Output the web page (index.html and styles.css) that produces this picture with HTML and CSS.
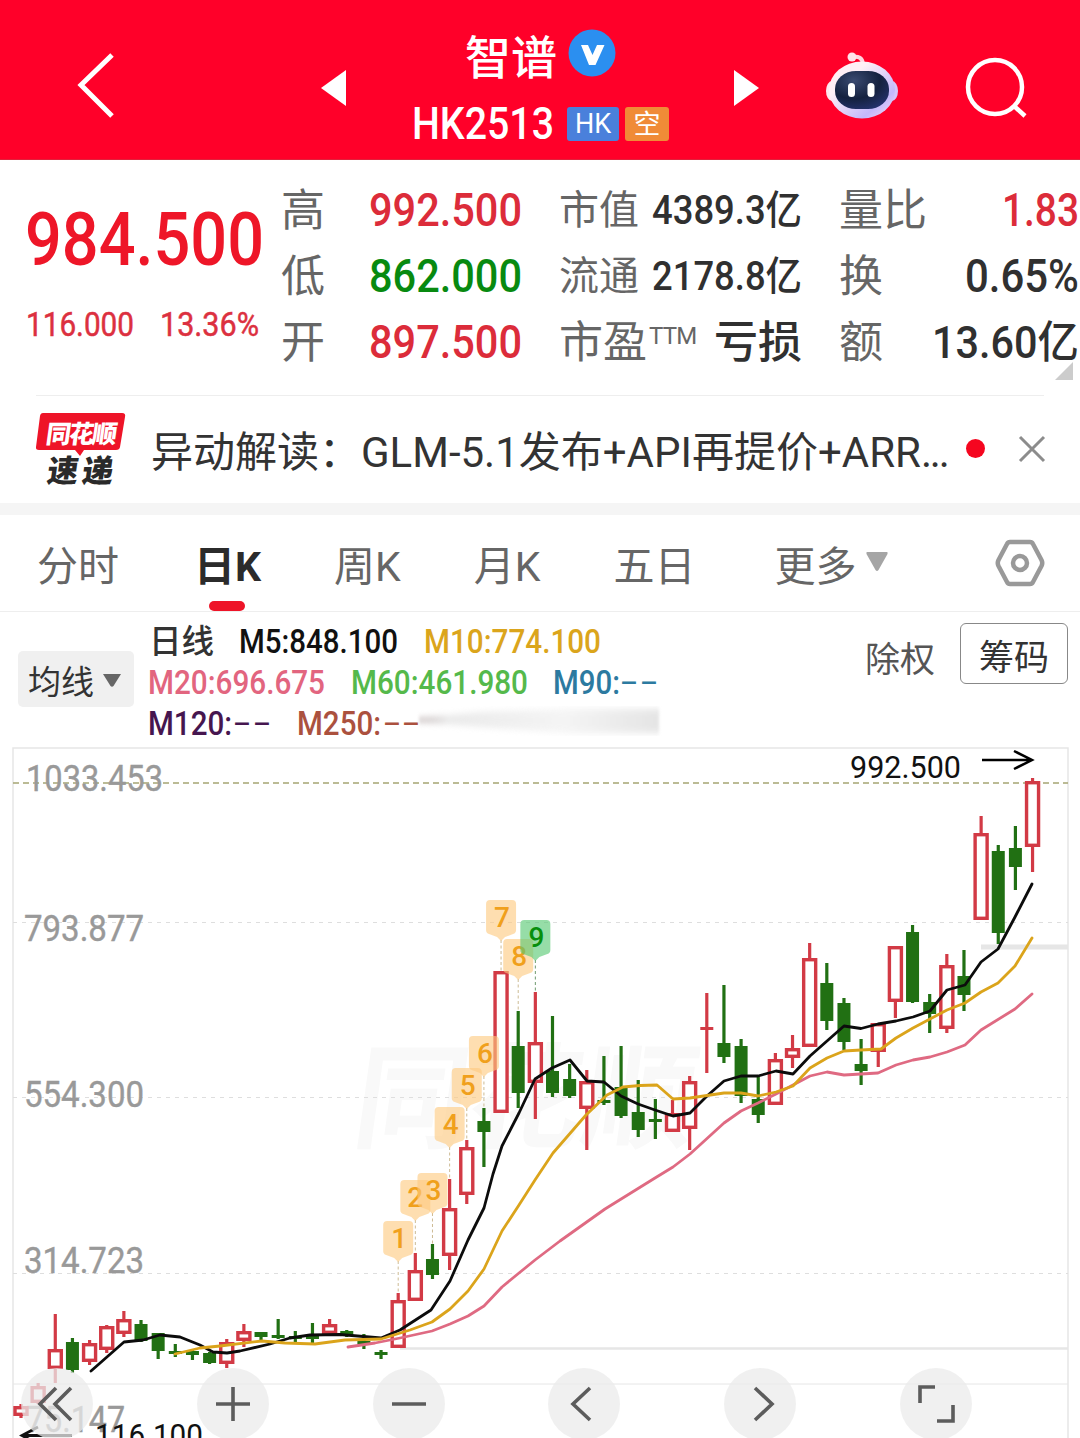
FILE: index.html
```html
<!DOCTYPE html>
<html lang="zh-CN">
<head>
<meta charset="utf-8">
<title>智谱 HK2513</title>
<link rel="stylesheet" href="styles.css">
</head>
<body>
<div class="app">
  <header class="header">
    <svg class="back" width="40" height="66" viewBox="0 0 40 66"><path d="M36 3 5 33 36 64" fill="none" stroke="#fff" stroke-width="5"/></svg>
    <svg class="prev" width="25" height="36" viewBox="0 0 25 36"><path d="M25 0V36L0 18z" fill="#fff"/></svg>
    <div class="title">
      <div class="name"><span>智谱</span>
        <svg width="48" height="48" viewBox="0 0 48 48"><circle cx="24" cy="25" r="23.5" fill="#2b8ff0"/><path d="M13 17H20L24.500 27 29 17H36.500L27.500 37H21z" fill="#fff"/></svg>
      </div>
      <div class="code">
        <svg class="fit" width="141" height="34"><text x="-1" y="32" font-size="43.500" font-weight="500" fill="#fff" textLength="142" lengthAdjust="spacingAndGlyphs">HK2513</text></svg>
        <span class="badge badge-hk">HK</span><span class="badge badge-short">空</span>
      </div>
    </div>
    <svg class="next" width="25" height="36" viewBox="0 0 25 36"><path d="M0 0V36L25 18z" fill="#fff"/></svg>
    <svg class="robot" width="74" height="70" viewBox="0 0 74 70">
      <defs>
        <linearGradient id="shell" x1="0" y1="0" x2="1" y2="1"><stop offset=".3" stop-color="#fff0f6"/><stop offset=".75" stop-color="#c3b8fb"/><stop offset="1" stop-color="#fbdcf3"/></linearGradient>
        <radialGradient id="visor" cx=".35" cy=".25" r=".8"><stop offset="0" stop-color="#3a4a70"/><stop offset=".6" stop-color="#14213f"/><stop offset="1" stop-color="#23306a"/></radialGradient>
      </defs>
      <path d="M27 6Q37 4 38 13" fill="none" stroke="#ffd5df" stroke-width="4"/><circle cx="27" cy="6" r="4.500" fill="#ffe3ea"/>
      <ellipse cx="7" cy="40" rx="6" ry="10" fill="#ffe6ee"/><ellipse cx="67" cy="40" rx="6" ry="10" fill="#d5c6fa"/>
      <ellipse cx="37" cy="39" rx="33" ry="28.500" fill="url(#shell)"/>
      <rect x="10" y="20" width="54" height="38" rx="21" ry="18" fill="url(#visor)"/>
      <rect x="23" y="32" width="7" height="14" rx="3.500" fill="#fff"/><rect x="42.500" y="32" width="7" height="14" rx="3.500" fill="#fff"/>
    </svg>
    <svg class="search" width="64" height="64" viewBox="0 0 64 64"><g fill="none" stroke="#fff" stroke-width="4.500"><circle cx="31" cy="30" r="27"/><path d="M49 48 61 59"/></g></svg>
  </header>

  <section class="quote">
    <div class="price">
      <svg class="fit" width="235" height="56"><text x="-2" y="54" font-size="75" font-weight="500" fill="#ee1628" textLength="239" lengthAdjust="spacingAndGlyphs">984.500</text></svg>
      <div class="change">
        <svg class="fit" width="106" height="26"><text x="-1" y="25" font-size="34" fill="#dc3040" stroke="#dc3040" stroke-width=".5" textLength="108" lengthAdjust="spacingAndGlyphs">116.000</text></svg>
        <svg class="fit" width="97" height="26"><text x="-1" y="25" font-size="34" fill="#dc3040" stroke="#dc3040" stroke-width=".5" textLength="99" lengthAdjust="spacingAndGlyphs">13.36%</text></svg>
      </div>
    </div>
    <dl class="stats stats-a">
      <div><dt>高</dt><dd><svg class="fit" width="151" height="66"><text x="-1" y="49" font-size="45.500" font-weight="500" fill="#dc2c3a" textLength="153" lengthAdjust="spacingAndGlyphs">992.500</text></svg></dd></div>
      <div><dt>低</dt><dd><svg class="fit" width="151" height="66"><text x="-1" y="49" font-size="45.500" font-weight="500" fill="#088a10" textLength="153" lengthAdjust="spacingAndGlyphs">862.000</text></svg></dd></div>
      <div><dt>开</dt><dd><svg class="fit" width="151" height="66"><text x="-1" y="49" font-size="45.500" font-weight="500" fill="#dc2c3a" textLength="153" lengthAdjust="spacingAndGlyphs">897.500</text></svg></dd></div>
    </dl>
    <dl class="stats stats-b">
      <div><dt class="small">市值</dt><dd><svg class="fit" width="150" height="66"><text x="0" y="47" font-size="40" font-weight="500" fill="#303030" textLength="150" lengthAdjust="spacingAndGlyphs">4389.3亿</text></svg></dd></div>
      <div><dt class="small">流通</dt><dd><svg class="fit" width="150" height="66"><text x="0" y="47" font-size="40" font-weight="500" fill="#303030" textLength="150" lengthAdjust="spacingAndGlyphs">2178.8亿</text></svg></dd></div>
      <div><dt>市盈<sup>TTM</sup></dt><dd class="loss">亏损</dd></div>
    </dl>
    <dl class="stats stats-c">
      <div><dt>量比</dt><dd><svg class="fit" width="77" height="66"><text x="-1" y="49" font-size="45.500" font-weight="500" fill="#dc2c3a" textLength="77" lengthAdjust="spacingAndGlyphs">1.83</text></svg></dd></div>
      <div><dt>换</dt><dd><svg class="fit" width="115" height="66"><text x="0" y="49" font-size="45.500" font-weight="500" fill="#303030" textLength="114" lengthAdjust="spacingAndGlyphs">0.65%</text></svg></dd></div>
      <div><dt>额</dt><dd><svg class="fit" width="147" height="66"><text x="-1" y="49" font-size="44" font-weight="500" fill="#303030" textLength="147" lengthAdjust="spacingAndGlyphs">13.60亿</text></svg></dd></div>
    </dl>
    <i class="corner"></i>
  </section>

  <section class="news">
    <svg class="logo" width="90" height="74" viewBox="0 0 90 74">
      <path d="M7 1H86Q90 1 89 5L84 35Q83.500 38 80 38H48L44 44 39 38H3Q-.500 38 0 35L4 4Q4.500 1 7 1z" fill="#ee1428"/>
      <g font-family="Noto Sans CJK SC, sans-serif" font-weight="900"><text transform="translate(9 31) skewX(-8)" font-size="25" fill="#fff" textLength="71">同花顺</text><text transform="translate(10 70) skewX(-8)" font-size="31" fill="#2a2a2a" textLength="66">速递</text></g>
    </svg>
    <p>异动解读：GLM-5.1发布+API再提价+ARR<span class="dots">...</span></p>
    <i class="dot"></i>
    <svg class="close" width="26" height="26" viewBox="0 0 26 26"><path d="M1 1 25 25M25 1 1 25" stroke="#8c8c8c" stroke-width="3"/></svg>
  </section>

  <nav class="tabs">
    <span>分时</span><span class="active">日K</span><span>周K</span><span>月K</span><span>五日</span>
    <span class="more">更多<svg width="22" height="20" viewBox="0 0 22 20"><path d="M1 0H21Q22 0 21.500 2L12.500 18Q11 20 9.500 18L.500 2Q0 0 1 0z" fill="#a5a5a5"/></svg></span>
    <svg class="gear" width="50" height="48" viewBox="0 0 50 48"><g fill="none" stroke="#999" stroke-width="4.500" stroke-linejoin="round"><path d="M15 3H35Q37 3 38 5L46.500 21Q48 24 46.500 27L38 43Q37 45 35 45H15Q13 45 12 43L3.500 27Q2 24 3.500 21L12 5Q13 3 15 3z"/><circle cx="25" cy="24" r="7"/></g></svg>
  </nav>

  <section class="legend">
    <button class="ma">均线<svg width="18" height="13" viewBox="0 0 18 13"><path d="M0 0H18L10.500 12Q9 13.500 7.500 12z" fill="#666"/></svg></button>
    <svg class="averages" width="520" height="120" viewBox="0 0 520 120">
      <defs><linearGradient id="fade"><stop offset="0" stop-color="#9b8a8a"/><stop offset=".12" stop-color="#dcdcdc"/><stop offset=".6" stop-color="#eee"/><stop offset="1" stop-color="#d4d4d4"/></linearGradient><filter id="soft"><feGaussianBlur stdDeviation="1.500 3"/></filter></defs>
      <path d="M270 95 330 89 420 86H510V110H420L330 104 270 99z" fill="url(#fade)" opacity=".6" filter="url(#soft)"/>
      <g font-size="34">
        <text class="cjk" x="0" y="30" font-size="32.500" font-weight="500" fill="#333">日线</text>
        <text x="90" y="30" fill="#111" font-weight="500" textLength="159" lengthAdjust="spacingAndGlyphs">M5:848.100</text>
        <text x="275" y="30" fill="#dba51c" font-weight="500" textLength="177" lengthAdjust="spacingAndGlyphs">M10:774.100</text>
        <text x="-1" y="71" fill="#e2657f" font-weight="500" textLength="177" lengthAdjust="spacingAndGlyphs">M20:696.675</text>
        <text x="202" y="71" fill="#55b94b" font-weight="500" textLength="177" lengthAdjust="spacingAndGlyphs">M60:461.980</text>
        <text x="404" y="71" fill="#2c7aa0" font-weight="500" textLength="67" lengthAdjust="spacingAndGlyphs">M90:</text>
        <text x="-1" y="112" fill="#46164f" font-weight="500" textLength="84" lengthAdjust="spacingAndGlyphs">M120:</text>
        <text x="148" y="112" fill="#ab513e" font-weight="500" textLength="84" lengthAdjust="spacingAndGlyphs">M250:</text>
        <g class="dashes">
          <text x="472" y="70" fill="#2c7aa0" textLength="16" lengthAdjust="spacingAndGlyphs">-</text><text x="492" y="70" fill="#2c7aa0" textLength="16" lengthAdjust="spacingAndGlyphs">-</text>
          <text x="85" y="111" fill="#46164f" textLength="16" lengthAdjust="spacingAndGlyphs">-</text><text x="105" y="111" fill="#46164f" textLength="16" lengthAdjust="spacingAndGlyphs">-</text>
          <text x="235" y="111" fill="#ab513e" textLength="16" lengthAdjust="spacingAndGlyphs">-</text><text x="254" y="111" fill="#ab513e" textLength="16" lengthAdjust="spacingAndGlyphs">-</text>
        </g>
      </g>
    </svg>
    <span class="adjust">除权</span>
    <button class="chips">筹码</button>
  </section>

  <section class="chart">
    <svg id="kline" width="1080" height="691" viewBox="0 747 1080 691">
      <text class="cjk" transform="translate(350 1139) skewX(-8)" font-size="114" font-weight="700" fill="#f9f9f9" textLength="342">同花顺</text>
      <g fill="none" stroke="#e6e6e6">
        <path d="M13 1438V748H1068V1438" stroke-width="1.500"/>
        <path d="M13 922.500H1068M13 1097.500H1068M13 1273.500H1068" stroke="#dedede" stroke-dasharray="4 5"/>
        <path d="M13 1384H1068"/>
        <path d="M400 1348.500H1068" stroke-width="2.500"/>
        <path d="M981 947H1068" stroke-width="5"/>
        <path d="M13 783H1068" stroke="#a5a573" stroke-width="1.700" stroke-dasharray="6 4"/>
      </g>
      <g font-size="36" fill="#999" stroke="#999" stroke-width=".4">
        <text x="26" y="791" textLength="137" lengthAdjust="spacingAndGlyphs">1033.453</text>
        <text x="24" y="941" textLength="120" lengthAdjust="spacingAndGlyphs">793.877</text>
        <text x="24" y="1107" textLength="120" lengthAdjust="spacingAndGlyphs">554.300</text>
        <text x="24" y="1273" textLength="120" lengthAdjust="spacingAndGlyphs">314.723</text>
        <text x="26" y="1432" textLength="99" lengthAdjust="spacingAndGlyphs">75.147</text>
      </g>
      <g id="candles"></g>
      <g fill="none" stroke-width="2.800" stroke-linejoin="round" stroke-linecap="round">
        <path stroke="#df6a82" d="M348 1347 375 1343 400 1338 432 1331 450 1324 468 1316 484 1306 502 1287 519 1273 535 1260 560 1241 605 1209 655 1178 673 1167 690 1154 724 1123 741 1111 758 1103 776 1094 793 1085 810 1076 827 1072 844 1075 878 1073 896 1065 913 1060 930 1057 947 1052 965 1045 981 1030 1015 1009 1032 994"/>
        <path stroke="#0c0c0c" d="M91 1371 124 1342 143 1340 160 1335 180 1337 200 1345 213 1352 227 1353 240 1351 270 1344 290 1338 310 1335 340 1334.500 381 1338 400 1330 431 1310 450 1281 468 1240 484 1208 493 1174 502 1146 519 1113 535 1079 552 1068 570 1060 587 1081 604 1082 621 1096 638 1104 655 1110 673 1116 690 1113 707 1096 724 1081 741 1076 758 1076 776 1071 793 1074 810 1056 844 1026 861 1028.500 878 1024 896 1021 913 1017 930 1011 947 990 965 985 981 962 998 949 1015 917 1032 884"/>
        <path stroke="#dba41b" d="M175 1354 200 1348 220 1346 262 1341 285 1343 315 1344 345 1340 381 1339 410 1330 432 1322 450 1309 468 1291 484 1269 502 1231 519 1205 535 1180 553 1153 586 1115 607 1095 623 1087 640 1085.500 657 1085 673 1099 690 1098 724 1093 741 1093 758 1096 776 1092 793 1086 810 1068 827 1058 844 1051 861 1050 881 1049 896 1038 913 1028 930 1019 947 1010 965 1003 981 992 998 983 1015 966 1032 938"/>
      </g>
      <g id="counts"></g>
      <text x="850" y="778" font-size="31" fill="#111" textLength="111" lengthAdjust="spacingAndGlyphs">992.500</text>
      <path d="M982 760H1032M1014 751 1032 760 1014 769" fill="none" stroke="#000" stroke-width="2.500"/>
      <text x="95" y="1446" font-size="31" fill="#111" textLength="108" lengthAdjust="spacingAndGlyphs">116.100</text>
      <path d="M72 1435.500H22M38 1427 22 1435.500 38 1444" fill="none" stroke="#111" stroke-width="2.800"/>
    </svg>
    <div class="controls">
      <button><svg viewBox="0 0 72 72"><path d="M35 20 19 36 35 52M50 20 34 36 50 52"/></svg></button>
      <button><svg viewBox="0 0 72 72"><path d="M19 36H53M36 19V53"/></svg></button>
      <button><svg viewBox="0 0 72 72"><path d="M19 36H53"/></svg></button>
      <button><svg viewBox="0 0 72 72"><path d="M42 20 25 36 42 52"/></svg></button>
      <button><svg viewBox="0 0 72 72"><path d="M31 20 48 36 31 52"/></svg></button>
      <button><svg viewBox="0 0 72 72"><path d="M20 35V19H35M53 37V53H37"/></svg></button>
    </div>
  </section>
</div>
<script src="chart.js"></script>
</body>
</html>
```
FILE: styles.css
```css
* { box-sizing: border-box; }
body { margin: 0; background: #fff; font-family: Roboto, "Noto Sans CJK SC", sans-serif; color: #333; }
.app { width: 1080px; height: 1438px; overflow: hidden; display: flex; flex-direction: column; }
svg { display: block; flex: none; overflow: visible; }
svg text { font-family: Roboto, "Noto Sans CJK SC", sans-serif; }
svg text.cjk { font-family: "Noto Sans CJK SC", sans-serif; }
button { border: 0; padding: 0; font: inherit; color: inherit; }

.header { height: 160px; flex: none; display: flex; align-items: flex-start; background: #ff0029; border-bottom: 1px solid #e0223c; color: #fff; }
.back { margin: 52px 0 0 76px; }
.prev { margin: 70px 0 0 205px; }
.title { width: 257px; margin: 28px 0 0 67px; }
.name { display: flex; gap: 11px; height: 50px; padding-left: 52px; font-size: 46px; line-height: 60px; font-weight: 500; }
.code { display: flex; margin-top: 29px; }
.badge { height: 34px; border-radius: 3px; line-height: 34px; text-align: center; font-size: 27px; }
.badge-hk { width: 52px; margin-left: 13px; background: #4a80db; }
.badge-short { width: 44px; margin-left: 6px; background: #f08b37; line-height: 36px; }
.next { margin: 70px 0 0 64px; }
.robot { margin: 51px 0 0 66px; }
.search { margin: 57px 0 0 65px; }

.quote { position: relative; height: 235px; flex: none; display: flex; padding-top: 17px; }
.price { width: 281px; padding: 34px 0 0 27px; }
.change { display: flex; gap: 28px; margin-top: 44px; }
.stats { margin: 0; }
.stats > div { display: flex; justify-content: space-between; height: 66px; line-height: 68px; }
.stats dt { font-size: 44px; color: #666; white-space: nowrap; }
.stats dt.small { font-size: 40px; }
.stats dd { margin: 0; }
.stats sup { font-size: 24px; line-height: 0; vertical-align: 14px; margin-left: 2px; letter-spacing: -.8px; }
.stats-a { width: 240px; }
.stats-b { width: 243px; margin-left: 38px; }
.stats-c { width: 241px; margin-left: 37px; }
.loss { font-size: 44px; font-weight: 500; color: #303030; }
.corner { position: absolute; right: 7px; bottom: 15px; border-style: solid; border-width: 0 0 18px 18px; border-color: transparent transparent #ccc; }

.news { height: 120px; flex: none; display: flex; align-items: flex-start; border-bottom: 12px solid #f5f5f5; padding-left: 36px; background: linear-gradient(#eee, #eee) 36px 0 / 1008px 1px no-repeat; }
.logo { margin-top: 17px; }
.news p { width: 800px; margin: 28px 0 0 25px; font-size: 42px; line-height: 60px; white-space: nowrap; }
.dots { letter-spacing: -2.200px; }
.dot { width: 19px; height: 19px; margin: 44px 0 0 15px; border-radius: 50%; background: #f5061f; }
.close { margin: 41px 0 0 34px; }

.tabs { height: 97px; flex: none; display: flex; align-items: flex-start; border-bottom: 1px solid #eee; padding-left: 37px; font-size: 41px; color: #666; line-height: 60px; }
.tabs span { position: relative; height: 96px; padding-top: 22px; margin-right: 73px; white-space: nowrap; }
.tabs .active { font-weight: 700; color: #2b2b2b; }
.tabs span:first-child { margin-right: 75px; }
.tabs span:nth-child(5) { margin-right: 79px; }
.tabs .active::after { content: ""; position: absolute; left: 15px; bottom: 0; width: 36px; height: 10px; border-radius: 5px; background: #ee1428; }
.tabs .more { display: flex; gap: 9px; margin: 0; }
.more svg { margin-top: 15px; }
.gear { margin: 24px 0 0 107px; }

.legend { height: 135px; flex: none; display: flex; align-items: flex-start; padding-left: 18px; }
.ma { display: flex; align-items: center; gap: 9px; width: 116px; height: 56px; margin-top: 39px; padding: 2px 0 0 10px; border-radius: 5px; background: #f0f0f0; font-size: 33px; }
.averages { margin: 11px 0 0 15px; }
.adjust { margin: 23px 0 0 196px; font-size: 35px; line-height: 52px; width: 95px; color: #555; }
.chips { width: 108px; height: 61px; margin-top: 11px; border: 1px solid #888; border-radius: 6px; background: #fff; font-size: 35px; padding-top: 1px; }

.chart { position: relative; height: 691px; flex: none; }
.controls { position: absolute; left: 21px; top: 621px; display: flex; gap: 103.800px; }
.controls button { width: 72px; height: 72px; border-radius: 50%; background: rgba(235, 235, 235, .75); }
.controls svg { width: 72px; height: 72px; }
.controls path { fill: none; stroke: #5c5c5c; stroke-width: 3.600; }
```
FILE: chart.js
```js
// Each candle: direction, high, body top, body bottom, low (chart units).
const candles = [
  ['r',1404,1406,1416,1418],['r',1383,1386,1403,1404],['r',1314,1349,1369,1383],['g',1338,1342,1370,1373],
  ['r',1340,1343,1362,1365],['r',1325,1326,1350,1353],['r',1311,1319,1334,1337],['g',1320,1324,1341,1342],
  ['g',1333,1333,1351,1359],['g',1344,1351,1353,1357],['g',1350,1351,1355,1360],['g',1352,1353,1363,1364],
  ['r',1339,1342,1364,1368],['r',1324,1331,1341,1347],['g',1332,1332,1337,1340],['g',1319,1335,1337,1339],
  ['g',1331,1336,1338,1343],['g',1323,1336,1338,1343],['r',1319,1324,1334,1334],['g',1330,1331,1336,1337],
  ['g',1334,1341,1344,1349],['g',1350,1352,1354,1359],['r',1293,1300,1348,1348],['r',1253,1270,1301,1301],
  ['g',1244,1259,1275,1279],['r',1179,1208,1256,1270],['r',1140,1147,1195,1204],['g',1108,1121,1132,1167],
  ['r',971,971,1113,1113],['g',1011,1046,1093,1108],['r',992,1042,1083,1119],['g',1016,1071,1093,1097],
  ['g',1064,1079,1096,1098],['r',1070,1081,1109,1150],['g',1056,1100,1102,1105],['g',1046,1087,1116,1118],
  ['g',1080,1112,1130,1137],['g',1099,1119,1122,1139],['r',1100,1113,1132,1132],['r',1076,1081,1129,1150],
  ['r',993,1027,1029,1073],['g',985,1043,1057,1063],['g',1039,1046,1096,1103],['g',1075,1099,1115,1123],
  ['r',1053,1059,1105,1105],['r',1035,1048,1058,1068],['r',943,958,1047,1047],['g',963,983,1021,1030],
  ['g',998,1003,1042,1050],['g',1039,1064,1071,1085],['r',1023,1023,1052,1067],['r',946,946,1002,1018],
  ['g',925,932,1002,1003],['g',994,1002,1014,1033],['r',954,965,1029,1033],['g',950,976,995,1011],
  ['r',816,833,920,920],['g',845,851,933,944],['g',826,848,867,890],['r',778,781,847,872]
];
const xOf = i => 21 + 17.145 * i;
let out = '';
candles.forEach(([dir, high, top, bottom, low], i) => {
  const x = xOf(i);
  const color = dir === 'r' ? '#d23a45' : '#217013';
  const wick = (a, b) => b > a ? `<path d="M${x} ${a}V${b}" stroke="${color}" stroke-width="3.2"/>` : '';
  out += wick(high, top) + wick(bottom, low);
  if (dir === 'r' && bottom - top > 5) {
    out += `<rect x="${x - 6}" y="${top + 1.7}" width="12" height="${bottom - top - 3.4}" fill="#fff" stroke="${color}" stroke-width="3.4"/>`;
  } else {
    out += `<rect x="${x - 6.5}" y="${top}" width="13" height="${Math.max(bottom - top, 3)}" fill="${color}"/>`;
  }
});
document.getElementById('candles').innerHTML = out;

// Sequence tags: number, candle index, top of the tag.
const counts = [[1,22,1221],[2,23,1180],[3,24,1173],[4,25,1107],[5,26,1068],[6,27,1036],[7,28,900],[8,29,939],[9,30,920]];
document.getElementById('counts').innerHTML = counts.map(([n, i, y]) => {
  const x = xOf(i);
  const last = n === 9;
  return `<path d="M${x} ${y + 40}V${candles[i][1]}" stroke="${last ? '#6f9a6f' : '#cdbb94'}" stroke-dasharray="3 2.5"/>`
    + `<path d="M${x - 11} ${y}h22q4 0 4 4v26q0 3 -3 4l-8 3 -4 4 -4 -4 -8 -3q-3 -1 -3 -4v-26q0 -4 4 -4z" fill="${last ? '#55c871' : '#fdca80'}" fill-opacity=".62"/>`
    + `<text x="${x + (n === 2 ? 0 : 1)}" y="${y + 27}" text-anchor="middle" font-size="28" font-weight="500" fill="${last ? '#078f0c' : '#f0a01c'}">${n}</text>`;
}).join('');
```
